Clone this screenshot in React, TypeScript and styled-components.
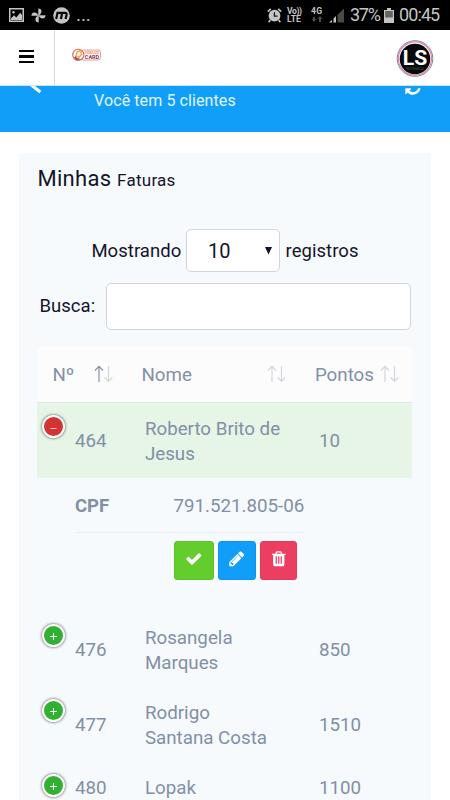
import React from "react";
import styled, { createGlobalStyle, css } from "styled-components";

const GlobalStyle = createGlobalStyle`
  * { box-sizing: border-box; }
  html, body { margin: 0; padding: 0; background: #fff; overflow: hidden; }
  body { font-family: Roboto, "Liberation Sans", sans-serif; }
`;

const Screen = styled.div`
  display: flex;
  flex-direction: column;
  width: 450px;
  height: 800px;
  overflow: hidden;
  background: #fff;
`;

/* ---------- system status bar ---------- */

const StatusBar = styled.div`
  display: flex;
  flex: none;
  justify-content: space-between;
  height: 30px;
  background: #000;
  color: #c4c4c4;
`;

const StatusGroup = styled.div<{ $end?: boolean }>`
  display: flex;
  align-items: center;
  padding: ${(p) => (p.$end ? "0 10px 0 0" : "0 0 0 9px")};
`;

const StatusIcon = styled.svg<{ $gap?: number }>`
  display: block;
  flex: none;
  margin-right: ${(p) => p.$gap ?? 0}px;
`;

const Dots = styled.span`
  font-size: 19px;
  line-height: 30px;
  letter-spacing: -0.1px;
`;

const NetworkLabel = styled.div<{ $width: number }>`
  display: flex;
  flex-direction: column;
  width: ${(p) => p.$width}px;
  font-size: 8.6px;
  font-weight: 700;
  line-height: 8px;
  white-space: nowrap;
`;

const NetworkLine = styled.span<{ $spacing?: number }>`
  display: block;
  height: 8px;
  letter-spacing: ${(p) => p.$spacing ?? 0}px;
`;

const StatusText = styled.span<{ $width: number; $spacing: number }>`
  width: ${(p) => p.$width}px;
  font-size: 18px;
  line-height: 30px;
  letter-spacing: ${(p) => p.$spacing}px;
  white-space: nowrap;
`;

/* ---------- page header ---------- */

const Header = styled.header`
  display: flex;
  flex: none;
  height: 56px;
  background: #fff;
  border-bottom: 1px solid #c9e4f7;
`;

const MenuButton = styled.button`
  display: flex;
  flex-direction: column;
  gap: 3px;
  width: 55px;
  padding: 20px 0 0 19px;
  background: none;
  border: 0;
  border-right: 1px solid #d9dadd;
`;

const MenuLine = styled.span`
  width: 15.4px;
  height: 2.3px;
  background: #050505;
`;

const Brand = styled.div`
  flex: 1;
  padding: 17px 0 0 17px;
`;

const Avatar = styled.div`
  padding: 9px 16px 0 0;
`;

/* ---------- banner ---------- */

const Banner = styled.section`
  display: flex;
  flex: none;
  justify-content: space-between;
  height: 46px;
  padding: 0 28px 0 28px;
  overflow: hidden;
  background: #109ef8;
  color: #e2f6ff;
`;

const BannerIcon = styled.svg`
  display: block;
  flex: none;
  margin-top: -8px;
`;

const BannerText = styled.p`
  flex: 1;
  margin: 4px 0 0 48px;
  font-size: 16px;
  line-height: 22px;
  letter-spacing: 0.1px;
`;

/* ---------- panel ---------- */

const Panel = styled.main`
  flex: none;
  width: 412px;
  height: 700px;
  margin: 21px 0 0 19px;
  padding: 0 18px 0 18.4px;
  background: #f6fafc;
`;

const Title = styled.h1`
  margin: 0;
  padding-top: 10px;
  color: #14142b;
  font-size: 22px;
  font-weight: 400;
  line-height: 32px;
  letter-spacing: 0.3px;
  small {
    font-size: 17px;
    letter-spacing: 0.25px;
  }
`;

const LengthRow = styled.div`
  display: flex;
  align-items: center;
  margin-top: 33px;
  padding-left: 54px;
  height: 43px;
  color: #14142b;
  font-size: 19px;
`;

const FieldText = styled.span<{ $width: number }>`
  width: ${(p) => p.$width}px;
  white-space: nowrap;
  font-size: 18.5px;
  letter-spacing: 0.05px;
`;

const field = css`
  background: #fff;
  border: 1px solid #d2d5dd;
  border-radius: 5px;
`;

const LengthSelect = styled.div`
  ${field}
  display: flex;
  align-items: center;
  justify-content: space-between;
  width: 94px;
  height: 43px;
  margin-right: 5.5px;
  padding: 0 7px 0 21px;
  font-size: 20px;
`;

const SearchRow = styled.label`
  display: flex;
  align-items: center;
  margin-top: 11px;
  padding-left: 2px;
  color: #14142b;
  ${FieldText} {
    margin-bottom: 2px;
  }
`;

const SearchInput = styled.input`
  ${field}
  width: 305px;
  height: 47px;
  outline: 0;
`;

/* ---------- table ---------- */

const Table = styled.div`
  width: 375px;
  margin-top: 17.3px;
  color: #8290a6;
  font-size: 18.75px;
  line-height: 25px;
`;

const HeadRow = styled.div`
  display: grid;
  grid-template-columns: 89px 173.5px 1fr;
  height: 56px;
  background: #fcfcfd;
  border-bottom: 1px solid #dfe5e4;
`;

const HeadCell = styled.div`
  display: flex;
  align-items: center;
  justify-content: space-between;
  padding: 1.6px 13.6px 0 15px;
  white-space: nowrap;
  svg {
    margin-top: -4px;
  }
`;

const Row = styled.div<{ $active?: boolean }>`
  display: grid;
  grid-template-columns: 37.5px 70px 174px 1fr;
  align-items: center;
  padding: 13.3px 0 11.7px;
  background: ${(p) => (p.$active ? "#e6f5e6" : "transparent")};
`;

const Name = styled.span`
  width: 136px;
`;

const ToggleSlot = styled.span`
  align-self: start;
  padding: 0 0 0 4.6px;
  height: 25px;
`;

const Toggle = styled.span<{ $open?: boolean }>`
  display: flex;
  align-items: center;
  justify-content: center;
  width: 23px;
  height: 23px;
  margin-top: -1.5px;
  border: 2.5px solid #fff;
  border-radius: 50%;
  background: ${(p) => (p.$open ? "#d33333" : "#31b131")};
  box-shadow: 0 0 3px #444;
`;

const Detail = styled.div`
  height: 134px;
  padding: 15.8px 0 0 37.5px;
`;

const DetailLine = styled.div`
  display: flex;
  width: 229.5px;
  height: 38.6px;
  border-bottom: 1px solid #eceff1;
`;

const DetailLabel = styled.strong`
  width: 98.5px;
  font-size: 18.5px;
  font-weight: 700;
`;

const Actions = styled.div`
  display: flex;
  padding: 8.4px 0 0 99.1px;
  gap: 4px;
`;

const tones = {
  green: "#63cd2c",
  blue: "#109ef8",
  red: "#ec3e60",
};

const ActionButton = styled.button<{ $tone: keyof typeof tones; $width: number }>`
  display: flex;
  justify-content: center;
  width: ${(p) => p.$width}px;
  height: 39px;
  padding: 9px 0 0;
  border: 0;
  border-radius: 3.5px;
  background: ${(p) => tones[p.$tone]};
  box-shadow: inset 0 0 0 1px rgba(0, 0, 0, 0.05);
`;

const paths = {
  check:
    "M1671 566q0 40-28 68l-724 724-136 136q-28 28-68 28t-68-28l-136-136-362-362q-28-28-28-68t28-68l136-136q28-28 68-28t68 28l294 295 656-657q28-28 68-28t68 28l136 136q28 28 28 68z",
  pencil:
    "M491 1536l91-91-235-235-91 91v107h128v128h107zm523-928q0-22-22-22-10 0-17 7l-542 542q-7 7-7 17 0 22 22 22 10 0 17-7l542-542q7-7 7-17zm-54-192l416 416-832 832h-416v-416zm683 96q0 53-37 90l-166 166-416-416 166-165q36-38 90-38 53 0 91 38l235 234q37 39 37 91z",
  trash:
    "M704 1376v-704q0-14-9-23t-23-9h-64q-14 0-23 9t-9 23v704q0 14 9 23t23 9h64q14 0 23-9t9-23zm256 0v-704q0-14-9-23t-23-9h-64q-14 0-23 9t-9 23v704q0 14 9 23t23 9h64q14 0 23-9t9-23zm256 0v-704q0-14-9-23t-23-9h-64q-14 0-23 9t-9 23v704q0 14 9 23t23 9h64q14 0 23-9t9-23zm-544-992h448l-48-117q-7-9-17-11h-317q-10 2-17 11zm928 32v64q0 14-9 23t-23 9h-96v948q0 83-47 143.5t-113 60.5h-832q-66 0-113-58.5t-47-141.5v-952h-96q-14 0-23-9t-9-23v-64q0-14 9-23t23-9h309l70-167q15-37 54-63t79-26h320q40 0 79 26t54 63l70 167h309q14 0 23 9t9 23z",
  refresh:
    "M1639 1056q0 5-1 7-64 268-268 434.5t-478 166.5q-146 0-282.5-55t-243.5-157l-129 129q-19 19-45 19t-45-19-19-45v-448q0-26 19-45t45-19h448q26 0 45 19t19 45-19 45l-137 137q71 66 161 102t187 36q134 0 250-65t186-179q11-17 53-117 8-23 30-23h192q13 0 22.5 9.5t9.5 22.5z",
};

const Glyph = ({ name, size = 17.5 }: { name: keyof typeof paths; size?: number }) => (
  <svg width={size} height={size} viewBox="0 0 1792 1792" fill="#fff">
    <path d={paths[name]} />
  </svg>
);

const SortIcon = ({ ascending }: { ascending?: boolean }) => (
  <svg width="19" height="18" viewBox="0 0 19 18" fill="none" strokeWidth="1.2">
    <path
      d="M5 17V1.5M1 5.5L5 1.3L9 5.5"
      stroke={ascending ? "#8793a5" : "#d3d7dc"}
    />
    <path d="M14.5 1V16.2M10.7 12.5L14.5 16.4L18.3 12.5" stroke="#d3d7dc" />
  </svg>
);

const BrandLogo = () => (
  <svg width="30" height="16" viewBox="0 0 30 16">
    <rect x="9" y="3" width="19.5" height="10" rx="2.5" fill="#fff" stroke="#d9818c" strokeWidth="0.8" />
    <circle cx="6.3" cy="7.8" r="5.6" fill="#fff" stroke="#d3606c" strokeWidth="1.1" />
    <path d="M8.8 3.5L5.2 4.8L3.8 10H7.2L9.6 7.2Z" fill="#fff6e4" stroke="#eda14b" strokeWidth="1.4" />
    <path d="M2.8 9.8L4.6 12.1L7.5 11.8" fill="none" stroke="#653245" strokeWidth="1.3" />
    <text x="13" y="7" fill="#e9a04e" fontSize="3.7" fontWeight="700" textLength="14">FIDELIZE</text>
    <text x="12.8" y="12" fill="#923451" fontSize="5.7" fontWeight="700" textLength="14.4" lengthAdjust="spacingAndGlyphs">CARD</text>
  </svg>
);

const AvatarLogo = () => (
  <svg width="38" height="38" viewBox="0 0 38 38">
    <circle cx="19" cy="19.5" r="17.8" fill="#fff" stroke="#77717e" strokeWidth="0.9" />
    <circle cx="19" cy="19.5" r="16.6" fill="#fff" stroke="#dc87b3" strokeWidth="1.1" />
    <circle cx="19" cy="20" r="15.3" fill="#080808" />
    <text x="6.8" y="26" fill="#fff" fontSize="20" fontWeight="700" textLength="24.5" lengthAdjust="spacingAndGlyphs">LS</text>
    <text x="10" y="31.3" fill="#4a4a4a" fontSize="3" textLength="18">MULTIMARCAS</text>
  </svg>
);

const clients = [
  { id: "476", name: "Rosangela Marques", points: "850" },
  { id: "477", name: "Rodrigo Santana Costa", points: "1510" },
  { id: "480", name: "Lopak", points: "1100" },
];

interface ClientRowProps {
  id: string;
  name: string;
  points: string;
  open?: boolean;
}

const ClientRow = ({ id, name, points, open }: ClientRowProps) => (
  <Row $active={open}>
    <ToggleSlot>
      <Toggle $open={open}>
        <svg width="9" height="9" viewBox="0 0 9 9" stroke="#fff" strokeWidth="1" fill="none">
          {open ? <path d="M1.5 6.5H7.5" opacity="0.75" /> : <path d="M1 5.5H8M4.5 2V9" />}
        </svg>
      </Toggle>
    </ToggleSlot>
    <span>{id}</span>
    <Name>{name}</Name>
    <span>{points}</span>
  </Row>
);

export default function App() {
  return (
    <Screen>
      <GlobalStyle />
      <StatusBar>
        <StatusGroup>
          <StatusIcon $gap={7} width="15" height="14" viewBox="0 0 15 14">
            <rect x="0.75" y="0.75" width="13.5" height="12.5" fill="none" stroke="#c4c4c4" strokeWidth="1.5" />
            <path d="M2 10.5L5 7.3L7.3 9.4L11.2 4.8L13 7V12H2Z" fill="#c4c4c4" />
            <circle cx="4.5" cy="4.3" r="1.2" fill="#c4c4c4" />
          </StatusIcon>
          <StatusIcon $gap={7} width="15" height="15" viewBox="0 0 15 15" fill="#c4c4c4">
            <path d="M7.3 7.5V0.5C10.8 0.5 11.5 3.6 9.3 6.4ZM7.5 7.3H14.5C14.5 10.8 11.4 11.5 8.6 9.3ZM7.7 7.5V14.5C4.2 14.5 3.5 11.4 5.7 8.6ZM7.5 7.7H0.5C0.5 4.2 3.6 3.5 6.4 5.7Z" />
          </StatusIcon>
          <StatusIcon $gap={6} width="17" height="17" viewBox="0 0 17 17">
            <circle cx="8.5" cy="8.5" r="8.3" fill="#c4c4c4" />
            <path d="M3.2 12L4.5 5.8H12Q14 5.8 13.6 7.4L12.6 12M7.9 12L9.2 5.8" fill="none" stroke="#080808" strokeWidth="2.2" />
          </StatusIcon>
          <Dots>...</Dots>
        </StatusGroup>
        <StatusGroup $end>
          <StatusIcon $gap={5} width="15" height="15" viewBox="0 0 15 15">
            <circle cx="7.5" cy="7.7" r="5.9" fill="#c4c4c4" />
            <path d="M0.8 3.7L3.8 0.9M11.2 0.9L14.2 3.7M3.3 12L1.7 14.2M11.7 12L13.3 14.2" stroke="#c4c4c4" strokeWidth="1.6" />
            <path d="M7.4 4.2V8.2H10.5" fill="none" stroke="#111" strokeWidth="1.2" />
          </StatusIcon>
          <NetworkLabel $width={24}>
            <NetworkLine $spacing={-0.4}>Vo))</NetworkLine>
            <NetworkLine>LTE</NetworkLine>
          </NetworkLabel>
          <NetworkLabel $width={18}>
            <NetworkLine $spacing={0.3}>4G</NetworkLine>
            <StatusIcon width="12" height="8" viewBox="0 0 12 8" fill="#4b4b4b">
              <path d="M2 2h2v2h1.5L3 7L0.5 4H2ZM8 7V4H6.5L9 1L11.5 4H10V7Z" />
            </StatusIcon>
          </NetworkLabel>
          <StatusIcon $gap={6} width="15" height="15" viewBox="0 0 15 15">
            <path d="M0 14.5L3 12V14.5Z M4.5 10.5L7 8V14.5H4.5Z" fill="#c4c4c4" />
            <path d="M8.5 6.7L15 0.5V14.5H8.5Z" fill="#494949" />
          </StatusIcon>
          <StatusText $width={34} $spacing={-1.3}>37%</StatusText>
          <StatusIcon $gap={5} width="10" height="16" viewBox="0 0 10 16">
            <path d="M3 1H7V3H10V16H0V3H3Z" fill="#c4c4c4" />
            <path d="M1.2 4H8.8V10.5H1.2Z" fill="#656565" />
          </StatusIcon>
          <StatusText $width={41} $spacing={-0.9}>00:45</StatusText>
        </StatusGroup>
      </StatusBar>

      <Header>
        <MenuButton aria-label="Menu">
          <MenuLine />
          <MenuLine />
          <MenuLine />
        </MenuButton>
        <Brand>
          <BrandLogo />
        </Brand>
        <Avatar>
          <AvatarLogo />
        </Avatar>
      </Header>

      <Banner>
        <BannerIcon width="18" height="18" viewBox="0 0 18 18">
          <path d="M11 1L4 7.5L12.3 14" fill="none" stroke="#fff" strokeWidth="3.2" />
        </BannerIcon>
        <BannerText>Você tem 5 clientes</BannerText>
        <BannerIcon width="18" height="18" viewBox="0 0 1792 1792" fill="#fff">
          <path d={paths.refresh} />
        </BannerIcon>
      </Banner>

      <Panel>
        <Title>
          Minhas <small>Faturas</small>
        </Title>
        <LengthRow>
          <FieldText $width={94.6}>Mostrando</FieldText>
          <LengthSelect>
            <span>10</span>
            <svg width="7" height="8" viewBox="0 0 7 8">
              <path d="M0 0H7L3.5 7.5Z" fill="#14142b" />
            </svg>
          </LengthSelect>
          <FieldText $width={80}>registros</FieldText>
        </LengthRow>
        <SearchRow>
          <FieldText $width={66.5}>Busca:</FieldText>
          <SearchInput />
        </SearchRow>

        <Table>
          <HeadRow>
            <HeadCell>
              <span>Nº</span>
              <SortIcon ascending />
            </HeadCell>
            <HeadCell>
              <span>Nome</span>
              <SortIcon />
            </HeadCell>
            <HeadCell>
              <span>Pontos</span>
              <SortIcon />
            </HeadCell>
          </HeadRow>
          <ClientRow id="464" name="Roberto Brito de Jesus" points="10" open />
          <Detail>
            <DetailLine>
              <DetailLabel>CPF</DetailLabel>
              <span>791.521.805-06</span>
            </DetailLine>
            <Actions>
              <ActionButton $tone="green" $width={40} aria-label="Confirmar">
                <Glyph name="check" />
              </ActionButton>
              <ActionButton $tone="blue" $width={38} aria-label="Editar">
                <Glyph name="pencil" />
              </ActionButton>
              <ActionButton $tone="red" $width={37} aria-label="Excluir">
                <Glyph name="trash" />
              </ActionButton>
            </Actions>
          </Detail>
          {clients.map((client) => (
            <ClientRow key={client.id} {...client} />
          ))}
        </Table>
      </Panel>
    </Screen>
  );
}
